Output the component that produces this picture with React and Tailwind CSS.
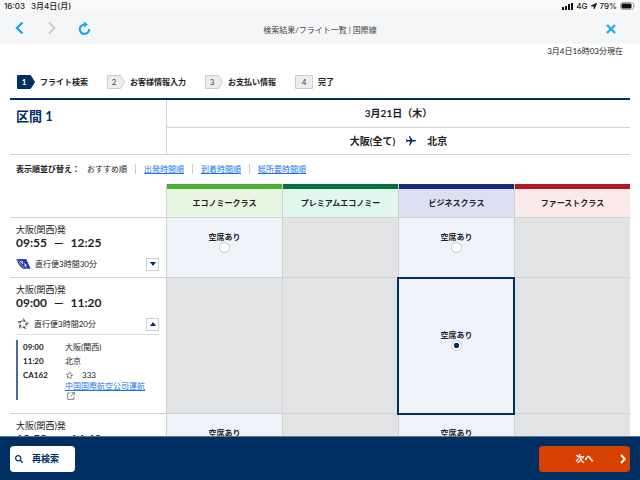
import { useState } from "react";
import { MdFlight } from "react-icons/md";
import { FaSearch, FaLocationArrow } from "react-icons/fa";

const STEPS = ["フライト検索", "お客様情報入力", "お支払い情報", "完了"];

const CLASSES = [
  { name: "エコノミークラス", head: "bg-[#e6f6e0]", bar: "bg-[#4cb033]" },
  { name: "プレミアムエコノミー", head: "bg-[#e1f7ee]", bar: "bg-[#00733c]" },
  { name: "ビジネスクラス", head: "bg-[#dbe0f5]", bar: "bg-[#1a2878]" },
  { name: "ファーストクラス", head: "bg-[#faeaea]", bar: "bg-[#b31821]" },
];

function StarIcon({ className }) {
  return (
    <svg viewBox="0 0 28 28" className={className} aria-hidden="true">
      {[0, 72, 144, 216, 288].map((a) => (
        <g key={a} transform={`rotate(${a} 14 14)`}>
          <path d="M15 1 L19 9.5 L14.5 9.5 Z" fill="#444" />
          <path d="M15 1 L9.5 8.5 L14.5 9.5 Z" fill="#c4c4c4" />
          <path d="M19 9.5 L21 9 L18.5 12 Z" fill="#888" />
        </g>
      ))}
    </svg>
  );
}

function TailIcon({ className }) {
  return (
    <svg viewBox="0 0 45 30" className={className} aria-hidden="true">
      <path d="M1 0 H31 L44 29 H20 C11 23 5 12 1 0 Z" fill="#2440a0" />
      <path d="M3 1 L24 28" stroke="#a9c8f0" strokeWidth="2" fill="none" />
      <path d="M12 6 L20 14 L18 5 M24 14 L31 18 L26 20 L32 25" stroke="#fff" strokeWidth="2.5" fill="none" />
    </svg>
  );
}

function ExternalIcon() {
  return (
    <svg viewBox="0 0 24 24" className="size-2" fill="none" stroke="#666" strokeWidth="2.5" aria-hidden="true">
      <path d="M10 3 H2 V22 H21 V14 M14 2 H22 V10 M22 2 L10 14" />
    </svg>
  );
}

function Toggle({ open, onClick }) {
  return (
    <button
      type="button"
      onClick={onClick}
      aria-label={open ? "詳細を閉じる" : "詳細を開く"}
      aria-expanded={open}
      className="flex size-[13px] items-center justify-center border border-[#ccd0d5] bg-white"
    >
      <svg viewBox="0 0 6 4" className="h-1 w-1.5" fill="#002f63" aria-hidden="true">
        <path d={open ? "M0 4 L3 0 L6 4 Z" : "M0 0 H6 L3 4 Z"} />
      </svg>
    </button>
  );
}

function FlightInfo({ depart, arrive, duration, icon, open, onToggle, children }) {
  return (
    <div className="pl-1.5 pr-[7px] pt-1.5">
      <p className="text-[9px] leading-3">大阪(関西)発</p>
      <p className="flex items-center gap-[7px] text-xs font-bold leading-[14px]">
        <span>{depart}</span>
        <span>—</span>
        <span>{arrive}</span>
      </p>
      <div className="mt-1.5 flex h-4 items-center text-[8px]">
        {icon}
        <span className="ml-1 flex-1">{duration}</span>
        <Toggle open={open} onClick={onToggle} />
      </div>
      {children}
    </div>
  );
}

function Seat({ value, label, selected, onSelect }) {
  return (
    <label className="flex flex-col items-center pb-2.5 text-[8px] font-bold leading-[10px]">
      空席あり
      <input
        type="radio"
        name="seat"
        aria-label={label}
        checked={selected === value}
        onChange={() => onSelect(value)}
        className="size-[11px] appearance-none rounded-full border border-[#c8cacd] bg-white checked:bg-[radial-gradient(circle,#002f63_0_2.5px,#fff_3px)]"
      />
    </label>
  );
}

function SeatCells({ row, selected, onSelect }) {
  return CLASSES.map((c, i) => {
    const value = `${row}-${i}`;
    const free = i === 2 || (i === 0 && row !== 1);
    const base = "border-b border-l border-[#cfd1d3] p-0 align-middle ";
    const on = selected === value ? "relative outline-2 -outline-offset-1 outline-[#002f63] " : "";
    return (
      <td key={value} className={base + on + (free ? "bg-[#eff3f9]" : "bg-[#e2e3e5]")}>
        {free && <Seat value={value} label={`${c.name} 空席あり`} selected={selected} onSelect={onSelect} />}
      </td>
    );
  });
}

export default function App() {
  const [selected, setSelected] = useState("1-2");
  const [open, setOpen] = useState(1);
  const toggle = (n) => setOpen(open === n ? -1 : n);

  return (
    <div className="flex h-screen flex-col bg-white font-['Lato','Noto_Sans_CJK_JP',sans-serif] text-[#222]">
      <div className="flex h-3 shrink-0 items-center gap-1.5 bg-[#f9f9f9] px-1 font-['Inter','Noto_Sans_CJK_JP',sans-serif] text-[8px] font-medium leading-3">
        <span>16:03</span>
        <span className="flex-1">3月4日(月)</span>
        <div className="flex items-center gap-[3px]">
          <svg viewBox="0 0 11 7" className="h-[7px] w-[11px]" fill="#111" aria-hidden="true">
            <path d="M0 4h2v3H0zM3 3h2v4H3zM6 1h2v6H6zM9 0h2v7H9z" />
          </svg>
          <span>4G</span>
          <FaLocationArrow className="size-1.5" />
          <span>79%</span>
          <svg viewBox="0 0 16 8" className="h-2 w-4" aria-hidden="true">
            <rect x=".5" y=".5" width="13" height="7" rx="2" fill="none" stroke="#aaa" />
            <rect x="1.5" y="1.5" width="10" height="5" rx="1" fill="#111" />
            <path d="M14.5 2.5 q1.5 1.5 0 3z" fill="#aaa" />
          </svg>
        </div>
      </div>

      <header className="flex h-8 shrink-0 items-center bg-[#f5f6f8] px-3.5">
        <div className="flex flex-1 items-center gap-5 pr-2.5">
          <button type="button" aria-label="戻る">
            <svg viewBox="0 0 12 14" className="h-3.5 w-3" fill="none" stroke="#1aa7ee" strokeWidth="2.4" aria-hidden="true">
              <path d="M8.5 1.5 L3 7 L8.5 12.5" />
            </svg>
          </button>
          <button type="button" aria-label="進む">
            <svg viewBox="0 0 12 14" className="h-3.5 w-3" fill="none" stroke="#ccced1" strokeWidth="2" aria-hidden="true">
              <path d="M3 1.5 L8.5 7 L3 12.5" />
            </svg>
          </button>
          <button type="button" aria-label="再読み込み">
            <svg viewBox="0 0 13 14" className="h-3.5 w-[13px]" fill="none" aria-hidden="true">
              <path d="M6.5 3.5 A4.7 4.7 0 1 0 11.2 8" stroke="#1aa7ee" strokeWidth="2.2" />
              <path d="M5.8 .4 L10 3.6 L5.8 6.8 Z" fill="#1aa7ee" />
            </svg>
          </button>
        </div>
        <h1 className="pt-1 text-[8px] text-[#444]">検索結果/フライト一覧 | 国際線</h1>
        <div className="flex flex-1 justify-end pr-2.5">
          <button type="button" aria-label="閉じる" className="pt-0.5">
            <svg viewBox="0 0 10 10" className="size-2.5" stroke="#2ba9ea" strokeWidth="2.4" aria-hidden="true">
              <path d="M1 1 L9 9 M9 1 L1 9" />
            </svg>
          </button>
        </div>
      </header>

      <main className="min-h-0 flex-1 overflow-y-auto px-2.5 [scrollbar-width:none]">
        <p className="pr-[7px] text-right text-[8px] leading-[14px]">3月4日16時03分現在</p>

        <ol className="mb-[9px] mt-[17px] flex gap-[19px] pl-[7px] text-[8px] font-bold leading-[14px]">
          {STEPS.map((s, i) => (
            <li key={s} className="flex items-center gap-[5px]">
              <span className="relative flex h-3.5 w-[18px] items-center">
                <svg viewBox="0 0 18 14" className="absolute inset-0" aria-hidden="true">
                  <path
                    d={i === 3 ? "M.5 .5 H17.5 V13.5 H.5 Z" : "M.5 .5 H13.5 L17.5 7 L13.5 13.5 H.5 Z"}
                    fill={i === 0 ? "#002f63" : "#ededed"}
                    stroke={i === 0 ? "#002f63" : "#cdcdcd"}
                  />
                </svg>
                <span className={i === 0 ? "relative w-3.5 text-center text-white" : i === 3 ? "relative w-[18px] text-center font-normal text-[#444]" : "relative w-3.5 text-center font-normal text-[#444]"}>
                  {i + 1}
                </span>
              </span>
              {s}
            </li>
          ))}
        </ol>

        <section className="flex border-b border-t-2 border-b-[#d4d4d4] border-t-[#002f63]">
          <h2 className="w-[156px] pl-1.5 pt-2 text-[13px] font-bold leading-4 text-[#002f63]">区間 1</h2>
          <div className="flex-1 border-l border-[#d4d4d4] text-center text-[10px] font-bold">
            <p className="border-b border-[#d4d4d4] leading-[27px]">3月21日（木）</p>
            <p className="flex items-center justify-center leading-[26px]">
              大阪(全て)
              <MdFlight className="mx-2.5 size-3 rotate-90 text-[#002f63]" />
              北京
            </p>
          </div>
        </section>

        <div className="flex h-[29px] items-center pb-0.5 pl-1.5 text-[8px] leading-[10px]">
          <span className="mr-[7px] font-bold">表示順並び替え：</span>
          <span>おすすめ順</span>
          {["出発時間順", "到着時間順", "総所要時間順"].map((s) => (
            <span key={s} className="ml-2 border-l border-[#ccc] pl-2">
              <a href="#sort" className="text-[#1b75e8] underline">{s}</a>
            </span>
          ))}
        </div>

        <table className="w-full table-fixed border-separate border-spacing-0">
          <thead>
            <tr>
              <td className="w-[156px] border-b border-[#cfd1d3]" />
              {CLASSES.map((c) => (
                <th
                  key={c.name}
                  scope="col"
                  className={"border-b border-l border-[#cfd1d3] p-0 text-[8px] font-bold leading-7 " + c.head}
                >
                  <div className={"h-[5px] " + c.bar} />
                  {c.name}
                </th>
              ))}
            </tr>
          </thead>
          <tbody>
            <tr className="h-[60px]">
              <td className="border-b border-[#cfd1d3] p-0 align-top">
                <FlightInfo
                  depart="09:55"
                  arrive="12:25"
                  duration="直行便3時間30分"
                  icon={<TailIcon className="h-2.5 w-[15px]" />}
                  open={open === 0}
                  onToggle={() => toggle(0)}
                />
              </td>
              <SeatCells row={0} selected={selected} onSelect={setSelected} />
            </tr>
            <tr className="h-[136px]">
              <td className="border-b border-[#cfd1d3] p-0 align-top">
                <FlightInfo
                  depart="09:00"
                  arrive="11:20"
                  duration="直行便3時間20分"
                  icon={<StarIcon className="size-3.5" />}
                  open={open === 1}
                  onToggle={() => toggle(1)}
                >
                  {open === 1 && (
                    <div className="mt-0.5 border-t border-[#e0e0e0] pt-[5px]">
                      <dl className="grid grid-cols-[42px_1fr] border-l-2 border-[#4a6c9b] pl-[5px] text-[8px] leading-[14px]">
                        <dt className="font-bold">09:00</dt>
                        <dd>大阪(関西)</dd>
                        <dt className="font-bold">11:20</dt>
                        <dd>北京</dd>
                        <dt className="font-bold">CA162</dt>
                        <dd>
                          <span className="flex items-center gap-2">
                            <StarIcon className="size-[9px]" />
                            333
                          </span>
                          <a href="#operator" className="block leading-2 text-[#1b75e8]">
                            <span className="underline">中国国際航空公司運航</span>
                            <span className="flex h-2.5 items-end pl-0.5">
                              <ExternalIcon />
                            </span>
                          </a>
                        </dd>
                      </dl>
                    </div>
                  )}
                </FlightInfo>
              </td>
              <SeatCells row={1} selected={selected} onSelect={setSelected} />
            </tr>
            <tr className="h-[60px]">
              <td className="border-b border-[#cfd1d3] p-0 align-top">
                <FlightInfo
                  depart="13:50"
                  arrive="14:40"
                  duration="直行便3時間50分"
                  icon={<StarIcon className="size-3.5" />}
                  open={open === 2}
                  onToggle={() => toggle(2)}
                />
              </td>
              <SeatCells row={2} selected={selected} onSelect={setSelected} />
            </tr>
          </tbody>
        </table>
      </main>

      <footer className="flex h-11 shrink-0 items-center justify-between border-t border-[#5f7594] bg-[#002f63] px-2.5 text-[9px] font-bold">
        <button type="button" className="flex h-[26px] w-[65px] items-center rounded-sm bg-white pl-[5px] text-[#002f63]">
          <FaSearch className="mr-[9px] size-2" />
          再検索
        </button>
        <button type="button" className="flex h-[26px] w-[91px] items-center rounded-sm bg-[#d64000] pr-1 text-white">
          <span className="flex-1 pl-2.5">次へ</span>
          <svg viewBox="0 0 6 10" className="h-2.5 w-1.5" fill="none" stroke="#fff" strokeWidth="2" aria-hidden="true">
            <path d="M1 1 L4.8 5 L1 9" />
          </svg>
        </button>
      </footer>
    </div>
  );
}
